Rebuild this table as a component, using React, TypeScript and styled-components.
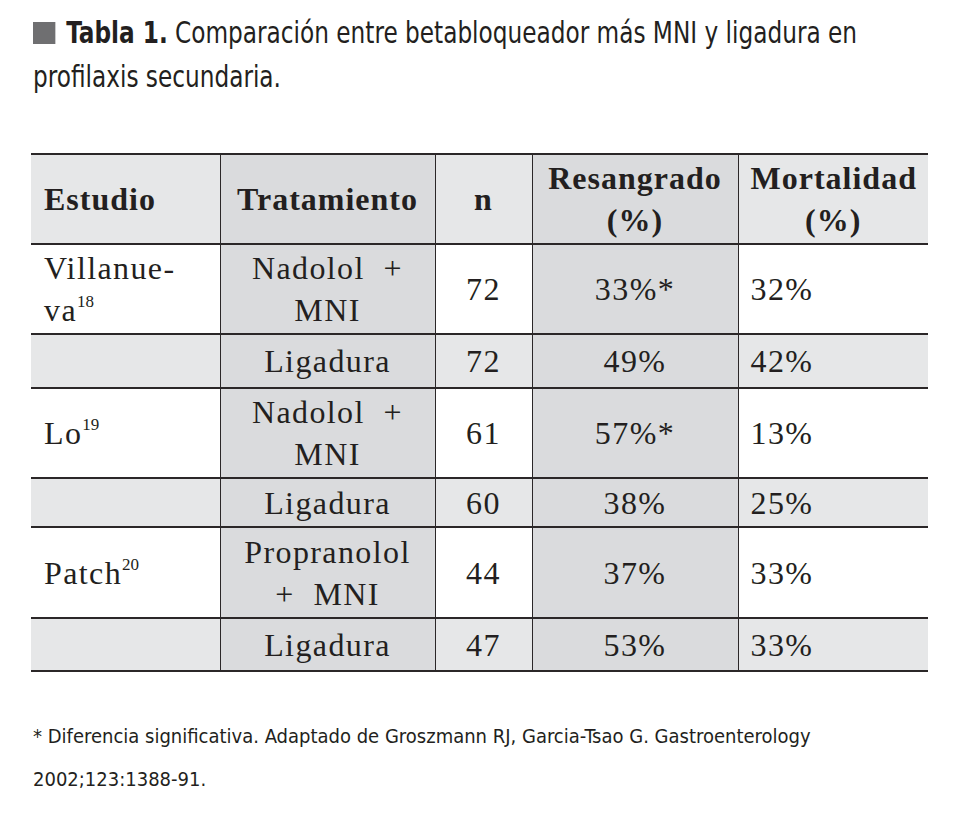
import React from "react";
import styled, { createGlobalStyle } from "styled-components";

const Global = createGlobalStyle`
  html, body { margin: 0; padding: 0; background: #ffffff; }
  body { font-family: "Liberation Serif", serif; color: #231f20; }
`;

const Page = styled.div`
  width: 958px;
  height: 829px;
  box-sizing: border-box;
  padding: 11px 30px 0 31px;
  display: flex;
  flex-direction: column;
  overflow: hidden;
`;

const CaptionFrame = styled.div`
  height: 88px;
  padding-left: 2px;
`;

const Caption = styled.div`
  width: 1000px;
  transform: scaleX(0.86);
  transform-origin: 0 0;
  font-family: "DejaVu Sans Condensed", "Liberation Sans", sans-serif;
  font-stretch: condensed;
  font-size: 30px;
  line-height: 44px;
  color: #231f20;
  white-space: nowrap;
`;

const Marker = styled.span`
  display: inline-block;
  width: 25.7px;
  height: 22px;
  background: #6f6f71;
  margin-right: 13px;
  vertical-align: -1px;
`;

const CaptionLabel = styled.b`
  font-weight: 700;
`;

const DataTable = styled.table`
  margin-top: 54px;
  width: 897px;
  border-collapse: collapse;
  table-layout: fixed;
  font-family: "Liberation Serif", serif;
  font-size: 32px;
  line-height: 42px;
  border-top: 2px solid #2b2728;
  border-bottom: 2px solid #2b2728;
`;

const Row = styled.tr<{ $h: number; $tint?: boolean }>`
  height: ${(p) => p.$h}px;
  background: ${(p) => (p.$tint ? "#e6e7e8" : "#ffffff")};
  border-bottom: 2px solid #2b2728;
`;

const HeadCell = styled.th<{ $dark?: boolean; $align?: string }>`
  font-weight: 700;
  letter-spacing: 1px;
  text-align: ${(p) => p.$align || "center"};
  vertical-align: middle;
  padding: 0 12px;
  background: ${(p) => (p.$dark ? "#dadbdd" : "transparent")};
  border-left: 1px solid #2b2728;
  &:first-child { border-left: none; padding-left: 13px; }
`;

const Cell = styled.td<{ $dark?: boolean; $align?: string }>`
  font-weight: 400;
  letter-spacing: 1.4px;
  text-align: ${(p) => p.$align || "center"};
  vertical-align: middle;
  padding: 0 12px;
  background: ${(p) => (p.$dark ? "#dadbdd" : "transparent")};
  border-left: 1px solid #2b2728;
  &:first-child { border-left: none; padding-left: 13px; }
`;

const Sup = styled.sup`
  font-size: 17px;
  line-height: 0;
  vertical-align: 14px;
  letter-spacing: 0;
`;

const Footnote = styled.p`
  margin: 43px 0 0 2px;
  font-family: "DejaVu Sans Condensed", "Liberation Sans", sans-serif;
  font-stretch: condensed;
  font-size: 20px;
  line-height: 43px;
  color: #231f20;
`;

type DataRow = {
  study?: React.ReactNode;
  treatment: React.ReactNode;
  n: string;
  rebleed: string;
  mortality: string;
  tall: boolean;
  h: number;
};

const rows: DataRow[] = [
  { study: <>Villanue-<br />va<Sup>18</Sup></>, treatment: <>Nadolol&nbsp; +<br />MNI</>, n: "72", rebleed: "33%*", mortality: "32%", tall: true, h: 90 },
  { treatment: "Ligadura", n: "72", rebleed: "49%", mortality: "42%", tall: false, h: 54 },
  { study: <>Lo<Sup>19</Sup></>, treatment: <>Nadolol&nbsp; +<br />MNI</>, n: "61", rebleed: "57%*", mortality: "13%", tall: true, h: 90 },
  { treatment: "Ligadura", n: "60", rebleed: "38%", mortality: "25%", tall: false, h: 49 },
  { study: <>Patch<Sup>20</Sup></>, treatment: <>Propranolol<br />+&nbsp; MNI</>, n: "44", rebleed: "37%", mortality: "33%", tall: true, h: 91 },
  { treatment: "Ligadura", n: "47", rebleed: "53%", mortality: "33%", tall: false, h: 53 },
];

export default function App() {
  return (
    <Page>
      <Global />
      <CaptionFrame>
        <Caption>
          <Marker />
          <CaptionLabel>Tabla 1.</CaptionLabel> Comparación entre betabloqueador más MNI y ligadura en
          <br />
          profilaxis secundaria.
        </Caption>
      </CaptionFrame>
      <DataTable>
        <colgroup>
          <col style={{ width: 189 }} />
          <col style={{ width: 215 }} />
          <col style={{ width: 97 }} />
          <col style={{ width: 206 }} />
          <col style={{ width: 190 }} />
        </colgroup>
        <thead>
          <Row $h={90} $tint>
            <HeadCell $align="left">Estudio</HeadCell>
            <HeadCell $dark>Tratamiento</HeadCell>
            <HeadCell>n</HeadCell>
            <HeadCell $dark>Resangrado<br />(%)</HeadCell>
            <HeadCell>Mortalidad<br />(%)</HeadCell>
          </Row>
        </thead>
        <tbody>
          {rows.map((r, i) => (
            <Row key={i} $h={r.h} $tint={!r.tall}>
              <Cell $align="left">{r.study}</Cell>
              <Cell $dark>{r.treatment}</Cell>
              <Cell>{r.n}</Cell>
              <Cell $dark>{r.rebleed}</Cell>
              <Cell $align="left">{r.mortality}</Cell>
            </Row>
          ))}
        </tbody>
      </DataTable>
      <Footnote>
        * Diferencia significativa. Adaptado de Groszmann RJ, Garcia-Tsao G. Gastroenterology
        <br />
        2002;123:1388-91.
      </Footnote>
    </Page>
  );
}
